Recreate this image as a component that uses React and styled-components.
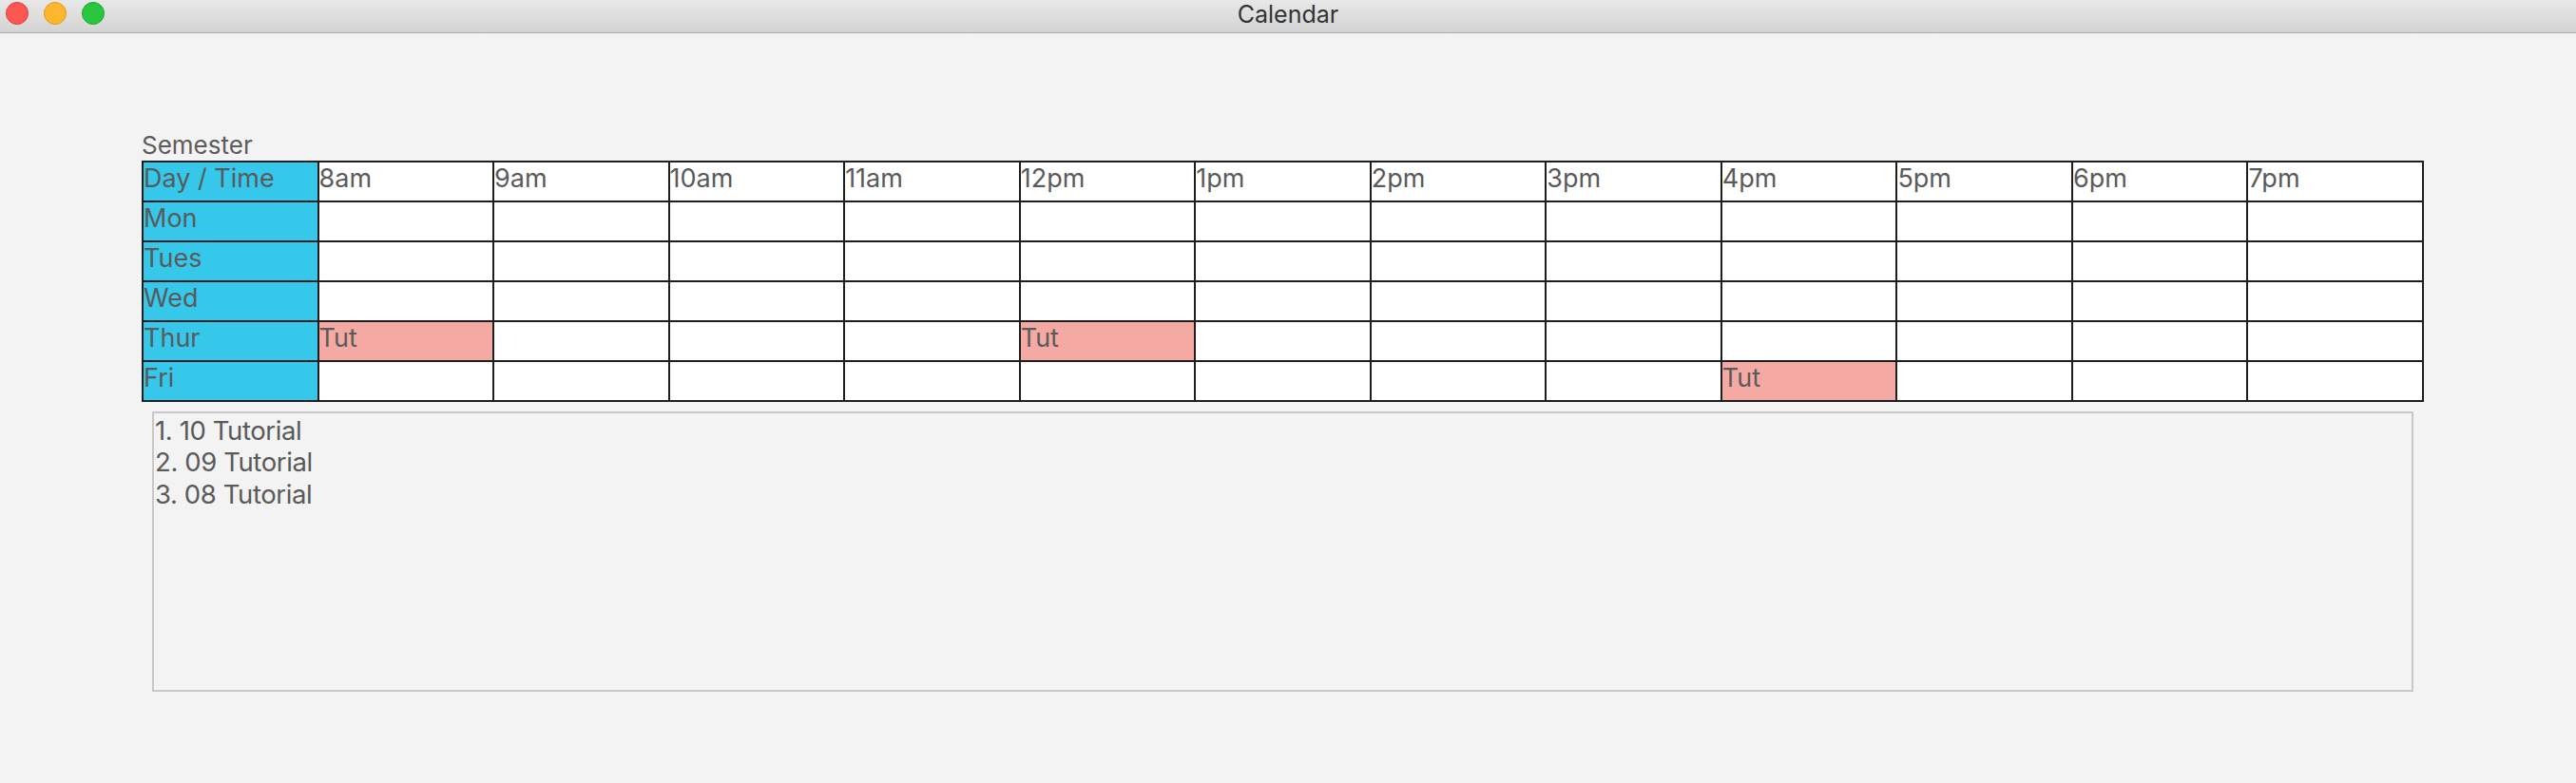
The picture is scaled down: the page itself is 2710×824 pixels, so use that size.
import styled, { createGlobalStyle } from 'styled-components';

const GlobalStyle = createGlobalStyle`
	html, body {
		margin: 0;
		padding: 0;
		background: #f3f3f3;
		font-family: Inter, "Liberation Sans", sans-serif;
	}
`;

const HOURS = ['8am', '9am', '10am', '11am', '12pm', '1pm', '2pm', '3pm', '4pm', '5pm', '6pm', '7pm'];

const DAYS = [
	{ name: 'Mon', slots: [] },
	{ name: 'Tues', slots: [] },
	{ name: 'Wed', slots: [] },
	{ name: 'Thur', slots: ['8am', '12pm'] },
	{ name: 'Fri', slots: ['4pm'] },
];

const TUTORIALS = ['10 Tutorial', '09 Tutorial', '08 Tutorial'];

const Window = styled.div`
	width: 2710px;
	height: 824px;
	background: #f3f3f3;
	display: flex;
	flex-direction: column;
`;

const TitleBar = styled.div`
	height: 34px;
	border-bottom: 1px solid #adadad;
	background: linear-gradient(#e8e8e8, #d3d3d3);
	display: flex;
	align-items: center;
	position: relative;
`;

const Lights = styled.div`
	display: flex;
	gap: 16px;
	padding-left: 6px;
	margin-top: -6px;
`;

const Light = styled.span`
	width: 22px;
	height: 22px;
	border-radius: 50%;
	background: ${(p) => p.color};
	border: 1px solid ${(p) => p.edge};
`;

const Title = styled.div`
	position: absolute;
	left: 0;
	right: 0;
	top: 0;
	text-align: center;
	font-size: 25px;
	line-height: 30px;
	color: #333;
`;

const Content = styled.div`
	padding: 102px 0 0 149px;
	width: 2401px;
`;

const Label = styled.div`
	font-size: 26px;
	line-height: 32px;
	color: #5c5c5c;
`;

const Grid = styled.div`
	display: grid;
	grid-template-columns: repeat(13, 1fr);
	gap: 2px;
	background: #1e1e1e;
	border: 2px solid #1e1e1e;
`;

const Cell = styled.div`
	height: 40px;
	background: ${(p) => (p.$tone === 'day' ? '#35c8ea' : p.$tone === 'busy' ? '#f4a9a3' : '#ffffff')};
	color: #5a5a5a;
	font-size: 27px;
	line-height: 34px;
	white-space: nowrap;
	overflow: hidden;
`;

const ListBox = styled.ol`
	list-style: none;
	margin: 10px 11px 0 11px;
	padding: 2px 0 0 1px;
	height: 289px;
	border: 2px solid #c8c8c8;
	font-size: 27.5px;
	letter-spacing: -0.4px;
	line-height: 33.3px;
	color: #5a5a5a;
`;

const Item = styled.li`
	white-space: nowrap;
`;

export default function App() {
	return (
		<>
			<GlobalStyle />
			<Window>
				<TitleBar>
					<Lights>
						<Light color="#fd5753" edge="#df3e3a" />
						<Light color="#feb62c" edge="#de9a1c" />
						<Light color="#28c73f" edge="#1ea52f" />
					</Lights>
					<Title>Calendar</Title>
				</TitleBar>
				<Content>
					<Label>Semester</Label>
					<Grid>
						<Cell $tone="day">Day / Time</Cell>
						{HOURS.map((h) => (
							<Cell key={h}>{h}</Cell>
						))}
						{DAYS.map((d) => [
							<Cell key={d.name} $tone="day">{d.name}</Cell>,
							...HOURS.map((h) => (
								<Cell key={d.name + h} $tone={d.slots.includes(h) ? 'busy' : undefined}>
									{d.slots.includes(h) ? 'Tut' : ''}
								</Cell>
							)),
						])}
					</Grid>
					<ListBox>
						{TUTORIALS.map((t, i) => (
							<Item key={t}>{i + 1}. {t}</Item>
						))}
					</ListBox>
				</Content>
			</Window>
		</>
	);
}
